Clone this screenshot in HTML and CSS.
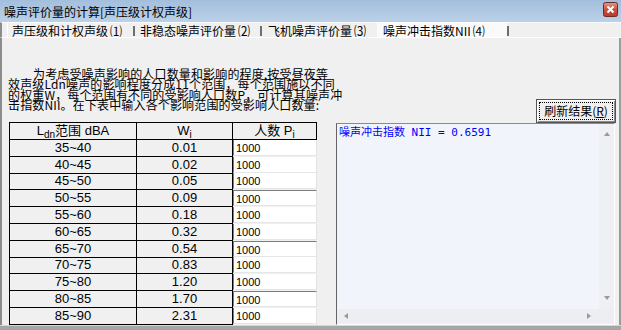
FILE: index.html
```html
<!DOCTYPE html>
<html>
<head>
<meta charset="utf-8">
<title>噪声评价量的计算</title>
<link rel="stylesheet" href="styles.css">
</head>
<body>
<div class="window">
	<div class="titlebar">
		<span class="title">噪声评价量的计算[声压级计权声级]</span>
		<svg class="close" width="15" height="15" viewBox="0 0 15 15">
			<defs>
				<linearGradient id="red" x1="0" y1="0" x2="0" y2="1">
					<stop offset="0" stop-color="#e39a8c"/>
					<stop offset="0.5" stop-color="#c9513f"/>
					<stop offset="1" stop-color="#b8382a"/>
				</linearGradient>
			</defs>
			<rect x="0.5" y="0.5" width="14" height="14" rx="2" fill="url(#red)" stroke="#6b2b22"/>
			<path d="M4.5 4.5 L10.5 10.5 M10.5 4.5 L4.5 10.5" stroke="#fff" stroke-width="2"/>
		</svg>
	</div>

	<div class="tabs">
		<div class="tab t1">声压级和计权声级<span class="num">⑴</span></div><span class="sep"></span>
		<div class="tab t2">非稳态噪声评价量<span class="num">⑵</span></div><span class="sep"></span>
		<div class="tab t3">飞机噪声评价量<span class="num">⑶</span></div>
		<div class="tab t4 active">噪声冲击指数NII<span class="num">⑷</span></div><span class="sep"></span>
	</div>

	<div class="main">
		<div class="left">
			<div class="para">
				<div class="line first">为考虑受噪声影响的人口数量和影响的程度,按受昼夜等</div>
				<div class="line">效声级Ldn噪声的影响程度分成11个范围，每个范围施以不同</div>
				<div class="line">的权重W，每个范围有不同的受影响人口数P，可计算其噪声冲</div>
				<div class="line">击指数NII。在下表中输入各个影响范围的受影响人口数量:</div>
			</div>

			<table class="grid">
				<colgroup><col class="c1"><col class="c2"><col class="c3"></colgroup>
				<tr><th>L<sub>dn</sub>范围 dBA</th><th>W<sub>i</sub></th><th>人数 P<sub>i</sub></th></tr>
				<tr><td>35~40</td><td>0.01</td><td class="in"><div class="box">1000</div></td></tr>
				<tr><td>40~45</td><td>0.02</td><td class="in"><div class="box">1000</div></td></tr>
				<tr><td>45~50</td><td>0.05</td><td class="in"><div class="box">1000</div></td></tr>
				<tr><td>50~55</td><td>0.09</td><td class="in"><div class="box grp">1000</div></td></tr>
				<tr><td>55~60</td><td>0.18</td><td class="in"><div class="box">1000</div></td></tr>
				<tr><td>60~65</td><td>0.32</td><td class="in"><div class="box">1000</div></td></tr>
				<tr><td>65~70</td><td>0.54</td><td class="in"><div class="box grp">1000</div></td></tr>
				<tr><td>70~75</td><td>0.83</td><td class="in"><div class="box">1000</div></td></tr>
				<tr><td>75~80</td><td>1.20</td><td class="in"><div class="box">1000</div></td></tr>
				<tr><td>80~85</td><td>1.70</td><td class="in"><div class="box grp">1000</div></td></tr>
				<tr><td>85~90</td><td>2.31</td><td class="in"><div class="box">1000</div></td></tr>
			</table>
		</div>

		<div class="right">
			<button class="refresh"><span class="focus">刷新结果(<u>R</u>)</span></button>
			<div class="result">
				<div class="out">噪声冲击指数 NII = 0.6591</div>
				<div class="vscroll"><i class="up"></i><i class="down"></i></div>
				<div class="hscroll"><i class="lt"></i><i class="rt"></i></div>
				<div class="corner"></div>
			</div>
		</div>
	</div>

	<div class="bottom"></div>
</div>
</body>
</html>
```

FILE: styles.css
```css
body{
	margin: 0;
	background: #f0f0f0;
	font-family: "Noto Sans CJK SC", sans-serif;
	font-size: 12px;
	color: #000;
}

.window{
	width: 621px;
	height: 330px;
	display: flex;
	flex-direction: column;
	overflow: hidden;
}

.titlebar{
	height: 22px;
	background: linear-gradient(#a3bedc, #bcd1e9);
	display: flex;
	align-items: center;
	justify-content: space-between;
	padding: 0 3px 0 4px;
}

.title{
	line-height: 22px;
	margin-top: 1px;
}

.close{
	margin-top: -4px;
}

.tabs{
	display: flex;
	background: #f0f0f0;
	border-top: 1px solid #fbfbfb;
	border-bottom: 1px solid #fff;
	border-left: 2px solid #8c8c8c;
	padding-left: 5px;
	box-sizing: border-box;
	height: 16px;
}

.tab{
	padding-top: 1px;
	line-height: 13px;
	white-space: nowrap;
	box-sizing: border-box;
}

.num{
	display: inline-block;
	width: 14px;
	text-align: right;
	font-size: 12px;
}

.t1{ width: 126px; padding-left: 4px; border-left: 1px solid #fff; }
.t2{ width: 125px; padding-left: 5px; }
.t3{ width: 115px; padding-left: 6px; }
.t4{ width: 130px; padding-left: 6px; }

.active{
	background: #fafafa;
}

.sep{
	width: 2px;
	height: 10px;
	margin-top: 3px;
	background: #6e6e6e;
}

.main{
	flex: 1;
	display: flex;
	border-left: 2px solid #8c8c8c;
	box-shadow: inset -2px 0 #9c9c9c;
}

.left{
	width: 334px;
	padding: 31px 0 0 7px;
	box-sizing: border-box;
}

.para{
	margin-left: -1px;
	line-height: 10.3px;
	white-space: nowrap;
	letter-spacing: 0.15px;
}

.first{
	padding-left: 25px;
}

.grid{
	margin-top: 12px;
	border-collapse: collapse;
	table-layout: fixed;
	width: 307px;
	font-family: "Liberation Sans", "Noto Sans CJK SC", sans-serif;
	font-size: 13px;
}

.c1{ width: 127px; }
.c2{ width: 96px; }
.c3{ width: 84px; }

.grid th,
.grid td{
	border: 1px solid #000;
	height: 15.8px;
	padding: 0;
	text-align: center;
	font-weight: normal;
	line-height: 14px;
}

.grid sub{
	font-size: 10px;
	line-height: 0;
	vertical-align: -3px;
}

.grid td.in{
	border-top: none;
	border-right: none;
	border-bottom: none;
	text-align: left;
}

.box{
	height: 15px;
	background: #fff;
	border-left: 1px solid #7c7c7c;
	border-right: 1px solid #e2e2e2;
	border-bottom: 1px solid #e6e6e6;
	padding-left: 2px;
	font-family: "Liberation Sans", sans-serif;
	font-size: 11px;
	line-height: 16px;
}

.grp{
	border-top: 1px solid #7c7c7c;
	height: 14px;
}

.right{
	width: 280px;
	padding-top: 61px;
	display: flex;
	flex-direction: column;
}

.refresh{
	align-self: flex-end;
	width: 80px;
	height: 24px;
	padding: 0;
	border: 1px solid #555;
	box-shadow: inset 1px 1px #fff, inset -1px -1px #8a8a8a;
	background: #f0f0f0;
	font-family: "Noto Sans CJK SC", sans-serif;
	font-size: 12px;
	color: #000;
	display: flex;
	align-items: center;
	justify-content: center;
}

.focus{
	display: block;
	width: 72px;
	height: 16px;
	line-height: 16px;
	border: 1px dotted #000;
}

.result{
	flex: 1;
	margin-right: 1px;
	display: grid;
	grid-template-columns: 1fr 15px;
	grid-template-rows: 1fr 15px;
	border-left: 1px solid #646464;
	border-top: 1px solid #8a8a8a;
	border-right: 1px solid #fff;
	border-bottom: 1px solid #fff;
	background: #f1f5fb;
}

.out{
	color: #0000ff;
	padding: 3px 0 0 2px;
	line-height: 12px;
	font-family: "DejaVu Sans Mono", "Noto Sans CJK SC", monospace;
	font-size: 11px;
	white-space: nowrap;
}

.vscroll{
	background: #eef0f3;
	display: flex;
	flex-direction: column;
	align-items: center;
	justify-content: space-between;
	padding: 8px 0 9px;
}

.hscroll{
	background: #eceef1;
	display: flex;
	align-items: center;
	justify-content: space-between;
	padding: 0 8px 0 7px;
}

.corner{
	background: #eceef1;
}

.up{
	border: 3px solid transparent;
	border-bottom: 4px solid #9a9a9a;
	border-top: none;
}

.down{
	border: 3px solid transparent;
	border-top: 4px solid #9a9a9a;
	border-bottom: none;
}

.lt{
	border: 3px solid transparent;
	border-right: 4px solid #9a9a9a;
	border-left: none;
}

.rt{
	border: 3px solid transparent;
	border-left: 4px solid #9a9a9a;
	border-right: none;
}

.bottom{
	height: 7px;
	box-sizing: border-box;
	border-top: 1px solid #d6d6d6;
	border-bottom: 4px solid #a6a6a6;
	background: #6e6e6e;
}
```
